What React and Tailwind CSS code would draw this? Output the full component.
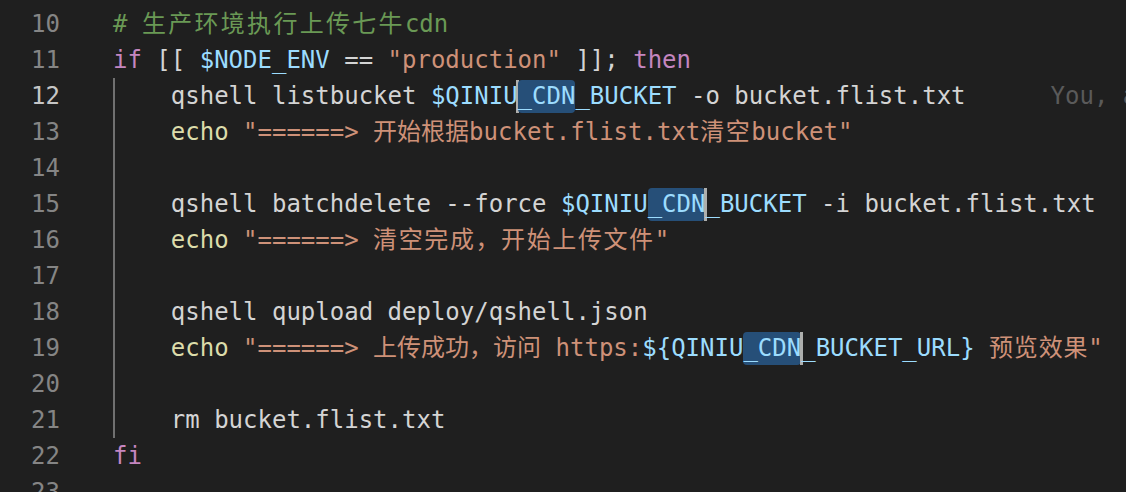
const lines = [10, 11, 12, 13, 14, 15, 16, 17, 18, 19, 20, 21, 22, 23];

const Kw = ({ children }) => <span className="text-[#c586c0]">{children}</span>;
const Var = ({ children }) => <span className="text-[#9cdcfe]">{children}</span>;
const Str = ({ children }) => <span className="text-[#ce9178]">{children}</span>;
const Fn = ({ children }) => <span className="text-[#dcdcaa]">{children}</span>;

const Hl = ({ children }) => (
  <span className="rounded-[4px] bg-[#264f78] pt-[2px] pb-[3px]">{children}</span>
);

const Cursor = () => (
  <span className="-mx-[1.5px] inline-block h-[33px] w-[3px] bg-[#aeafad] align-[-9px]" />
);

const Line = ({ children }) => <div className="h-[36px] whitespace-pre">{children}</div>;

export default function App() {
  return (
    <div className="h-[492px] w-[1126px] overflow-hidden bg-[#1f1f1f] font-['DejaVu_Sans_Mono','Noto_Sans_CJK_SC',monospace] text-[24px] leading-[36px] text-[#d4d4d4]">
      <div className="flex pt-[6px]">
        <div className="w-[60px] shrink-0 text-right text-[#858585]">
          {lines.map((n) => (
            <div key={n} className={`h-[36px] ${n === 12 ? 'text-[#c6c6c6]' : ''}`}>
              {n}
            </div>
          ))}
        </div>

        <div className="ml-[53px] flex-1">
          <Line>
            <span className="text-[#6a9955]">
              # <span className="tracking-[2.3px]">生产环境执行上传七牛</span>cdn
            </span>
          </Line>
          <Line>
            <Kw>if</Kw> [[ <Var>$NODE_ENV</Var> == <Str>"production"</Str> ]]; <Kw>then</Kw>
          </Line>

          <div className="shadow-[inset_2px_0_0_#707070]">
            <Line>
              {'    qshell listbucket '}
              <Var>
                $QINIU<Cursor />
                <Hl>_CDN</Hl>_BUCKET
              </Var>
              {' -o bucket.flist.txt'}
              <span className="pl-[85px] text-[#5a5a5a]">You, a few seconds ago</span>
            </Line>
            <Line>
              {'    '}
              <Fn>echo</Fn>{' '}
              <Str>
                {'"======> '}
                <span>开始根据</span>bucket.flist.txt<span className="tracking-[1.5px]">清空</span>bucket"
              </Str>
            </Line>
            <Line> </Line>
            <Line>
              {'    qshell batchdelete --force '}
              <Var>
                $QINIU<Hl>_CDN</Hl>
                <Cursor />_BUCKET
              </Var>
              {' -i bucket.flist.txt'}
            </Line>
            <Line>
              {'    '}
              <Fn>echo</Fn>{' '}
              <Str>
                {'"======> '}
                <span className="tracking-[1.6px]">清空完成，开始上传文件</span>"
              </Str>
            </Line>
            <Line> </Line>
            <Line>{'    qshell qupload deploy/qshell.json'}</Line>
            <Line>
              {'    '}
              <Fn>echo</Fn>{' '}
              <Str>
                {'"======> '}
                <span>上传成功，访问</span>
                {' https:'}
              </Str>
              <Var>
                {'${QINIU'}
                <Hl>_CDN</Hl>
                <Cursor />
                {'_BUCKET_URL}'}
              </Var>
              <Str>
                {' '}
                <span className="tracking-[0.8px]">预览效果</span>"
              </Str>
            </Line>
            <Line> </Line>
            <Line>{'    rm bucket.flist.txt'}</Line>
          </div>

          <Line>
            <Kw>fi</Kw>
          </Line>
          <Line> </Line>
        </div>
      </div>
    </div>
  );
}
